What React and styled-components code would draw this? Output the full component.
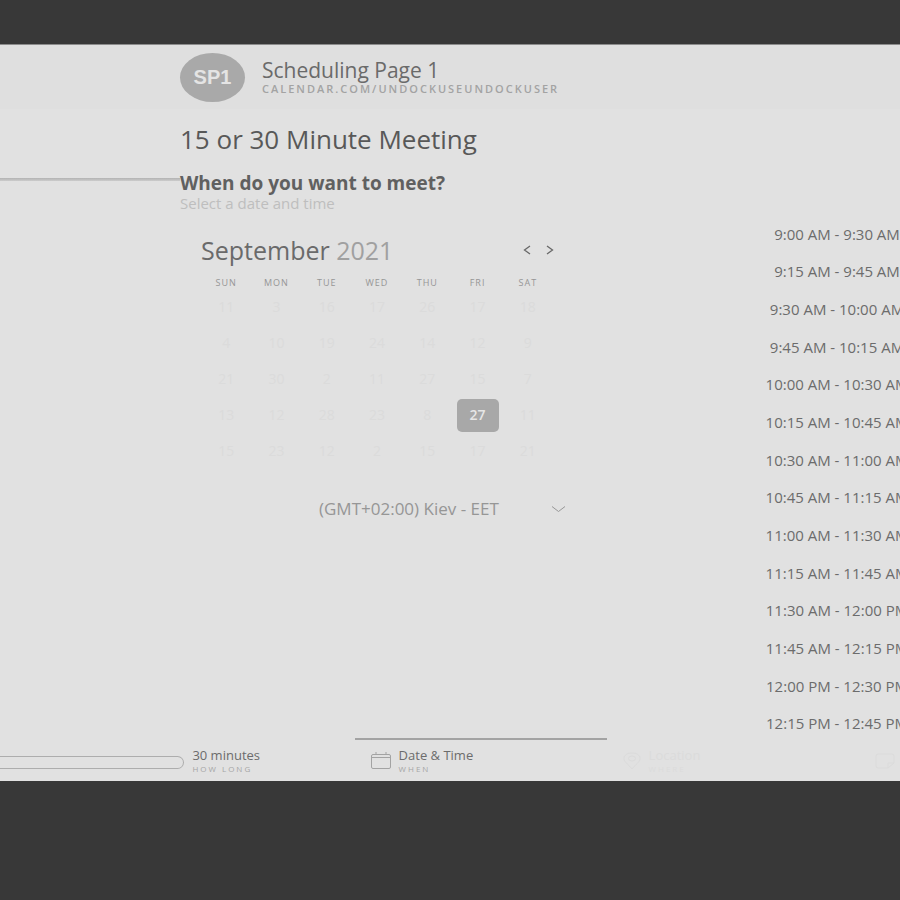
import React, { useState } from "react";
import styled, { createGlobalStyle } from "styled-components";

const GlobalStyle = createGlobalStyle`
  * { box-sizing: border-box; }
  body {
    margin: 0;
    background: #383838;
    font-family: "Open Sans", "Noto Sans", sans-serif;
    color: #6a6a6a;
  }
  button, select { font: inherit; color: inherit; }
  button { padding: 0; border: 0; background: none; cursor: pointer; }
`;

const Backdrop = styled.div`
  display: flex;
  min-height: 100vh;
  padding: 44px 0 119px;
  overflow: hidden;
`;

const Panel = styled.div`
  flex: 1;
  min-width: 0;
  display: flex;
  flex-direction: column;
  background: #e1e1e1;
  border-top: 1px solid #8c8c8c;
`;

const Header = styled.header`
  display: flex;
  align-items: center;
  gap: 17px;
  height: 64px;
  padding-left: 20%;
  background: #dfdfdf;
`;

const Avatar = styled.div`
  display: flex;
  align-items: center;
  justify-content: center;
  width: 65px;
  height: 49px;
  border-radius: 50%;
  background: #a9a9a9;
  color: #e4e4e4;
  font: bold 20px/24px "Liberation Sans", sans-serif;
`;

const PageName = styled.div`
  font-size: 21px;
  line-height: 24px;
`;

const PageLink = styled.a`
  display: block;
  font-size: 11px;
  line-height: 14px;
  font-weight: 600;
  letter-spacing: 2px;
  text-transform: uppercase;
  text-decoration: none;
  color: #a3a3a3;
`;

const Main = styled.main`
  flex: 1;
  display: grid;
  grid-template-columns: 20% 65% 15%;
`;

const Rule = styled.hr`
  align-self: start;
  width: 100%;
  height: 3px;
  margin: 69px 0 0;
  border: 0;
  background: linear-gradient(#b2b2b2, #cccccc);
`;

const Title = styled.h1`
  margin: 13px 0 0;
  font-size: 26px;
  line-height: 34px;
  font-weight: 500;
  color: #585858;
`;

const Question = styled.h2`
  margin: 15px 0 0;
  font-size: 19px;
  line-height: 24px;
  font-weight: 700;
  color: #606060;
`;

const Hint = styled.p`
  margin: 0;
  font-size: 15px;
  line-height: 16px;
  color: #bebebe;
`;

const Calendar = styled.section`
  max-width: 352px;
  margin: 20px 0 0 21px;
`;

const MonthBar = styled.div`
  display: flex;
  align-items: center;
  justify-content: space-between;
  height: 38px;
  margin-right: -5px;
`;

const Month = styled.h3`
  margin: 0;
  font-size: 25px;
  line-height: 32px;
  font-weight: 400;
`;

const Year = styled.span`
  color: #a0a0a0;
`;

const Arrows = styled.div`
  display: flex;
  gap: 7px;
`;

const ArrowButton = styled.button`
  display: flex;
  justify-content: center;
  width: 16px;
  color: #686868;
`;

const DayTable = styled.table`
  width: 100%;
  table-layout: fixed;
  border-collapse: collapse;
  text-align: center;
`;

const Weekday = styled.th`
  height: 20px;
  padding: 8px 0 0;
  font-size: 9px;
  line-height: 12px;
  font-weight: 400;
  letter-spacing: 1px;
  color: #969696;
`;

const DayCell = styled.td`
  height: 36px;
  padding: 0;
`;

const Day = styled.button`
  display: block;
  width: 42px;
  height: 33px;
  margin: 0 auto;
  border-radius: 5px;
  font-size: 14px;
  line-height: 20px;
  font-weight: ${(p) => (p.$selected ? 600 : 400)};
  color: ${(p) => (p.$selected ? "#e6e6e6" : "#dbdbdb")};
  background: ${(p) => (p.$selected ? "#a8a8a8" : "transparent")};
`;

const ZoneField = styled.label`
  display: flex;
  align-items: center;
  width: 247px;
  margin: 26px 0 0 139px;
  color: #969696;
`;

const ZoneSelect = styled.select`
  flex: 1;
  height: 28px;
  padding: 0;
  border: 0;
  appearance: none;
  background: transparent;
  font-size: 17px;
  line-height: 24px;
`;

const Times = styled.ul`
  display: grid;
  grid-auto-rows: 1fr;
  min-width: 0;
  margin: 106px 0 -4px;
  padding: 0;
  list-style: none;
  overflow: hidden;
`;

const TimeItem = styled.li`
  display: flex;
`;

const TimeButton = styled.button`
  flex: 0 0 144px;
  text-align: center;
  white-space: nowrap;
  font-size: 15px;
  line-height: 20px;
  color: #6c6c6c;
`;

const Footer = styled.nav`
  display: flex;
  height: 43px;
  overflow: hidden;
`;

const Step = styled.button`
  flex: 0 0 28%;
  display: flex;
  align-items: center;
  gap: 8px;
  padding-left: 16px;
  text-align: left;
  border-top: 2px solid ${(p) => (p.$active ? "#a3a3a3" : "transparent")};
  color: ${(p) => (p.$faint ? "#dbdbdb" : "#6c6c6c")};
`;

const DurationStep = styled(Step)`
  flex-basis: 39.4%;
  padding-left: 0;
`;

const DurationTrack = styled.span`
  flex: 0 0 52%;
  height: 13px;
  margin-top: 3px;
  border: 1px solid #adadad;
  border-left: 0;
  border-radius: 0 7px 7px 0;
`;

const StepName = styled.span`
  display: block;
  font-size: 13px;
  line-height: 16px;
  font-weight: 500;
`;

const StepNote = styled.span`
  display: block;
  font-size: 8px;
  line-height: 12px;
  letter-spacing: 2px;
  text-transform: uppercase;
  color: ${(p) => (p.$faint ? "#dbdbdb" : "#a6a6a6")};
`;

const Icon = styled.svg`
  flex: none;
  fill: none;
  stroke: currentColor;
`;

const StepIcon = styled(Icon)`
  color: ${(p) => (p.$faint ? "#dbdbdb" : "#a3a3a3")};
`;

const weekdays = ["SUN", "MON", "TUE", "WED", "THU", "FRI", "SAT"];

const weeks = [
  [11, 3, 16, 17, 26, 17, 18],
  [4, 10, 19, 24, 14, 12, 9],
  [21, 30, 2, 11, 27, 15, 7],
  [13, 12, 28, 23, 8, 27, 11],
  [15, 23, 12, 2, 15, 17, 21],
];

const times = [
  "9:00 AM - 9:30 AM",
  "9:15 AM - 9:45 AM",
  "9:30 AM - 10:00 AM",
  "9:45 AM - 10:15 AM",
  "10:00 AM - 10:30 AM",
  "10:15 AM - 10:45 AM",
  "10:30 AM - 11:00 AM",
  "10:45 AM - 11:15 AM",
  "11:00 AM - 11:30 AM",
  "11:15 AM - 11:45 AM",
  "11:30 AM - 12:00 PM",
  "11:45 AM - 12:15 PM",
  "12:00 PM - 12:30 PM",
  "12:15 PM - 12:45 PM",
];

export default function App() {
  const [selected, setSelected] = useState("3-5");

  return (
    <>
      <GlobalStyle />
      <Backdrop>
        <Panel>
          <Header>
            <Avatar>SP1</Avatar>
            <div>
              <PageName>Scheduling Page 1</PageName>
              <PageLink href="#page">calendar.com/undockuseundockuser</PageLink>
            </div>
          </Header>

          <Main>
            <Rule />
            <div>
              <Title>15 or 30 Minute Meeting</Title>
              <Question>When do you want to meet?</Question>
              <Hint>Select a date and time</Hint>

              <Calendar>
                <MonthBar>
                  <Month>
                    September <Year>2021</Year>
                  </Month>
                  <Arrows>
                    <ArrowButton aria-label="Previous month">
                      <Icon width="8" height="10" viewBox="0 0 8 10" strokeWidth="1.3">
                        <path d="M7 1 1.5 5 7 9" />
                      </Icon>
                    </ArrowButton>
                    <ArrowButton aria-label="Next month">
                      <Icon width="8" height="10" viewBox="0 0 8 10" strokeWidth="1.3">
                        <path d="M1 1 6.5 5 1 9" />
                      </Icon>
                    </ArrowButton>
                  </Arrows>
                </MonthBar>
                <DayTable>
                  <thead>
                    <tr>
                      {weekdays.map((name) => (
                        <Weekday key={name}>{name}</Weekday>
                      ))}
                    </tr>
                  </thead>
                  <tbody>
                    {weeks.map((week, row) => (
                      <tr key={row}>
                        {week.map((day, col) => {
                          const id = `${row}-${col}`;
                          return (
                            <DayCell key={id}>
                              <Day $selected={id === selected} onClick={() => setSelected(id)}>
                                {day}
                              </Day>
                            </DayCell>
                          );
                        })}
                      </tr>
                    ))}
                  </tbody>
                </DayTable>
              </Calendar>

              <ZoneField>
                <ZoneSelect aria-label="Time zone">
                  <option>(GMT+02:00) Kiev - EET</option>
                </ZoneSelect>
                <Icon width="15" height="8" viewBox="0 0 15 8">
                  <path d="M1 1.5 7.5 6.5 14 1.5" />
                </Icon>
              </ZoneField>
            </div>

            <Times>
              {times.map((time) => (
                <TimeItem key={time}>
                  <TimeButton>{time}</TimeButton>
                </TimeItem>
              ))}
            </Times>
          </Main>

          <Footer>
            <DurationStep>
              <DurationTrack />
              <span>
                <StepName>30 minutes</StepName>
                <StepNote>How long</StepNote>
              </span>
            </DurationStep>
            <Step $active>
              <StepIcon width="20" height="17" viewBox="0 0 20 17">
                <rect x="0.5" y="2.5" width="19" height="14" rx="1.5" />
                <path d="M0.5 5.5H19.5M5 0V3M15 0V3" />
              </StepIcon>
              <span>
                <StepName>Date &amp; Time</StepName>
                <StepNote>When</StepNote>
              </span>
            </Step>
            <Step $faint>
              <StepIcon $faint width="18" height="18" viewBox="0 0 18 18">
                <path d="M9 17C5 12 1 10 1 6.5C1 3 4.5 1 9 1S17 3 17 6.5C17 10 13 12 9 17Z" />
                <ellipse cx="9" cy="6.5" rx="3.5" ry="2.5" />
              </StepIcon>
              <span>
                <StepName>Location</StepName>
                <StepNote $faint>Where</StepNote>
              </span>
            </Step>
            <Step $faint aria-label="Notes">
              <StepIcon $faint width="20" height="16" viewBox="0 0 20 16">
                <path d="M3 1H17Q19 1 19 3V10L13 15H3Q1 15 1 13V3Q1 1 3 1ZM13 15V10H19" />
              </StepIcon>
            </Step>
          </Footer>
        </Panel>
      </Backdrop>
    </>
  );
}
